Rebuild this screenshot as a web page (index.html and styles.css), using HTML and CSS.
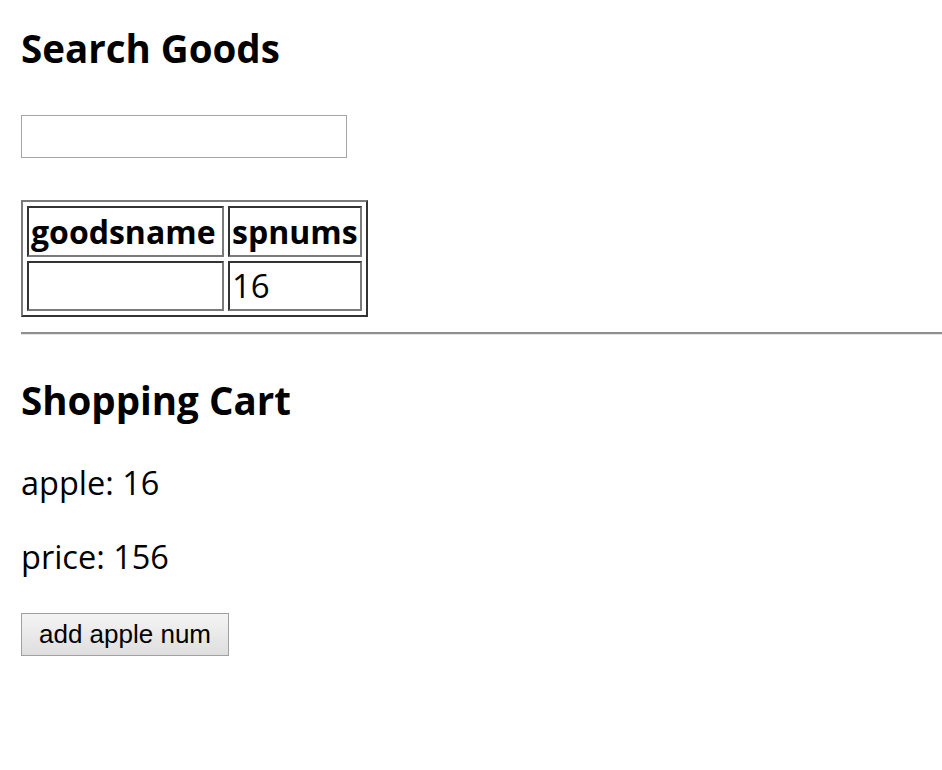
FILE: index.html
```html
<!DOCTYPE html>
<html>
<head>
<meta charset="utf-8">
<link rel="stylesheet" href="styles.css">
</head>
<body>
<div class="page">
  <h2 class="title first">Search Goods</h2>
  <input class="search" type="text">
  <table class="goods">
    <tr><th class="c1">goodsname</th><th class="c2">spnums</th></tr>
    <tr><td class="c1"></td><td class="c2">16</td></tr>
  </table>
  <hr class="rule">
  <h2 class="title second">Shopping Cart</h2>
  <p class="line">apple: 16</p>
  <p class="line">price: 156</p>
  <button class="btn" type="button">add apple num</button>
</div>
</body>
</html>
```
FILE: styles.css
```css
html, body {
  margin: 0;
  padding: 0;
  background: #fff;
}
.page {
  padding: 22px 0 0 21px;
  font-family: "Open Sans", "Noto Sans", sans-serif;
  color: #000;
}
.title {
  font-size: 38.5px;
  line-height: 52px;
  font-weight: 700;
  margin: 0;
}
.title.first { margin-bottom: 41px; }
.title.second { margin-top: 39px; margin-bottom: 35px; }
.search {
  display: block;
  box-sizing: border-box;
  width: 326px;
  height: 43px;
  margin: 0 0 42px;
  border: 1px solid #a5a5a5;
  padding: 0;
  background: #fff;
}
.goods {
  border-collapse: separate;
  border-spacing: 4px;
  border: 2px solid;
  border-color: #7a7a7a #333 #333 #7a7a7a;
  margin: 0 0 15px;
  font-size: 32px;
}
.goods th, .goods td {
  border: 2px solid;
  border-color: #333 #7a7a7a #7a7a7a #333;
  padding: 0 2px;
  text-align: left;
  box-sizing: border-box;
}
.goods th { height: 51px; line-height: 45px; font-weight: 700; }
.goods td { height: 50px; line-height: 46px; font-weight: 400; font-size: 33px; }
.goods .c1 { width: 197px; }
.goods .c2 { width: 133px; }
.rule {
  margin: 0;
  border: 0;
  border-top: 2px solid #8f8f8f;
  border-bottom: 1px solid #e6e6e6;
  height: 0;
}
.line {
  font-size: 32.5px;
  line-height: 44px;
  margin: 0 0 30px;
}
.btn {
  display: block;
  box-sizing: border-box;
  width: 208px;
  height: 43px;
  margin-top: 34px;
  padding: 0;
  border: 1px solid #a0a0a0;
  border-radius: 0;
  background: linear-gradient(#f4f4f4, #dedede);
  font-family: "Liberation Sans", Arial, sans-serif;
  font-size: 26px;
  color: #000;
}
```
